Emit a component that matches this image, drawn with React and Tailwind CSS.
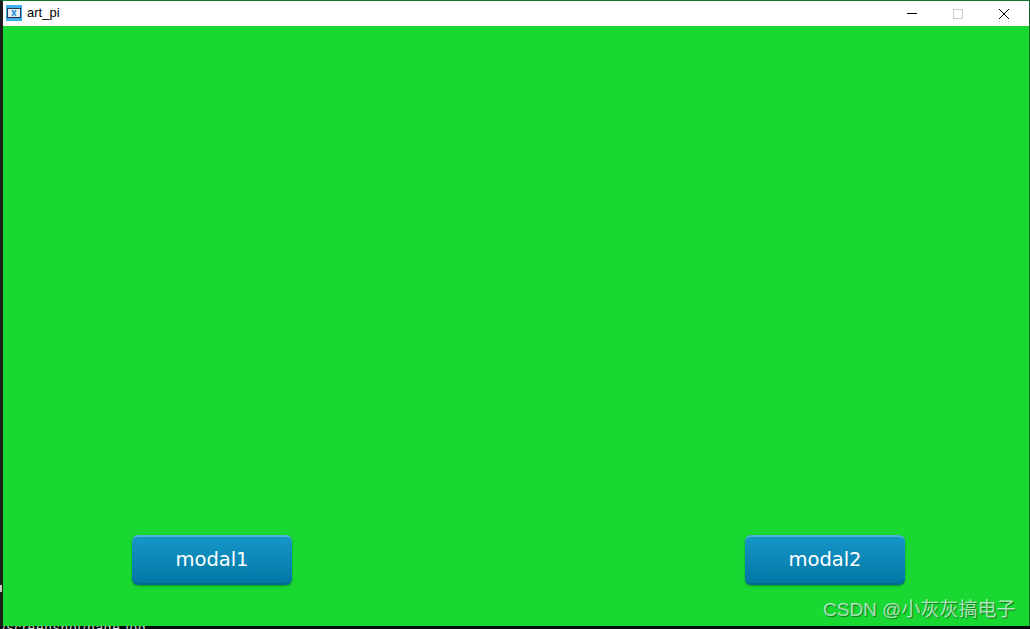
import React from "react";

const ModalButton = ({ label }) => (
  <button className="w-[160px] h-[50px] rounded-[6px] border-t-2 border-t-[#4fb0d8] border-b-2 border-b-[#04688f] bg-gradient-to-b from-[#1597c8] to-[#0277a5] text-white text-[19.5px] font-['DejaVu_Sans',sans-serif] shadow-[0_1px_2px_rgba(0,80,40,0.5)]">
    {label}
  </button>
);

const AppIcon = () => (
  <svg width="16" height="16" viewBox="0 0 16 16" className="shrink-0">
    <rect width="16" height="16" fill="#3fb0ea" />
    <rect x="1" y="3" width="14" height="10" fill="#2b3a55" />
    <rect x="2" y="4" width="12" height="8" fill="#e8eef5" />
    <path d="M6 5l4 6M10 5l-4 6" stroke="#2f8fd8" strokeWidth="1.4" />
    <rect x="1" y="12" width="14" height="1" fill="#1c2a44" />
  </svg>
);

export default function App() {
  return (
    <div className="w-[1030px] h-[629px] flex flex-col overflow-hidden bg-black relative">
      <div className="flex-1 min-h-0 flex flex-col border-t border-t-[#0f7a2a] border-l-[3px] border-l-[#1a1f1c] border-r border-r-[#136b2c]">
        <div className="h-[25px] bg-white flex items-center shrink-0">
          <div className="ml-[3px] flex items-center gap-[5px] -mt-px">
            <AppIcon />
            <span className="text-[13px] text-black font-['Liberation_Sans',sans-serif]">art_pi</span>
          </div>
          <div className="ml-auto flex items-center h-full">
            <div className="w-[46px] flex justify-center">
              <div className="w-[10px] h-px bg-black" />
            </div>
            <div className="w-[46px] flex justify-center">
              <div className="w-[10px] h-[10px] border border-[#cccccc]" />
            </div>
            <div className="w-[46px] flex justify-center mr-[2px]">
              <svg width="12" height="12" viewBox="0 0 12 12">
                <path d="M1 1l10 10M11 1L1 11" stroke="#000" strokeWidth="1" />
              </svg>
            </div>
          </div>
        </div>
        <div className="flex-1 bg-[#19d832] flex items-end justify-between pl-[129px] pr-[124px] pb-[41px]">
          <ModalButton label="modal1" />
          <ModalButton label="modal2" />
        </div>
      </div>
      <div className="h-[3px] shrink-0 overflow-hidden bg-[#0a0a0a]">
        <div className="pl-[2px] -mt-[6px] text-[13px] leading-[15px] text-[#d8d8d8] font-['Liberation_Sans',sans-serif] tracking-[1.2px]">
          /screenshot/page.log
        </div>
      </div>
      <div className="absolute left-0 top-[585px] w-[2px] h-[7px] bg-[#c8c8c8]" />
      <span className="absolute left-[823px] top-[598px] text-[19px] leading-[24px] text-[#ffffff]/65 [text-shadow:1px_1px_1px_rgba(0,60,20,0.6)] font-['Liberation_Sans','Noto_Sans_CJK_SC',sans-serif]">
        CSDN @小灰灰搞电子
      </span>
    </div>
  );
}
